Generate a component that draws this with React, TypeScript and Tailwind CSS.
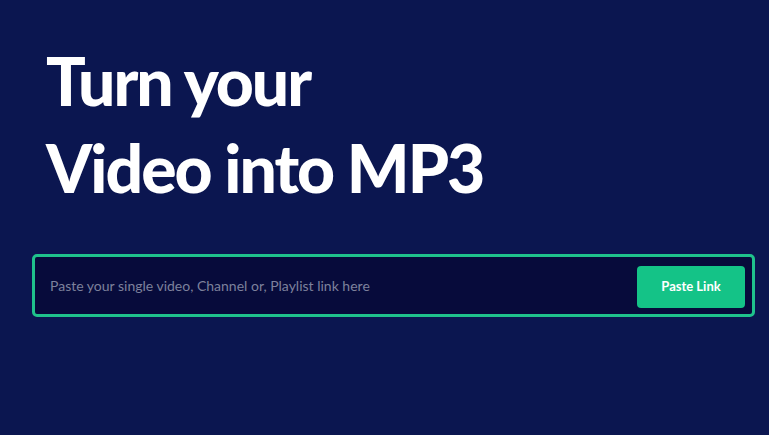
export default function App() {
    return (
        <div className="min-h-screen w-full bg-[#0b1650] pt-[37px] font-['Lato',sans-serif]">
            {/* Heading */}
            <h1 className="ml-[46px] text-[66px] font-black leading-[87px] tracking-[-2px] text-white">
                Turn your
                <br />
                Video into MP3
            </h1>

            {/* Link input */}
            <div className="ml-[32px] mt-[43px] flex h-[63px] w-[723px] items-center rounded-[5px] border-[3px] border-[#1fc28c] bg-[#070b3b] pl-[15px] pr-[7px]">
                <input
                    type="text"
                    autoFocus
                    placeholder="Paste your single video, Channel or, Playlist link here"
                    className="h-full flex-1 bg-transparent font-['Lato',sans-serif] text-[14px] text-white caret-[#9aa0c0] outline-none placeholder:text-[#7d819c]"
                />
                <button className="mt-[2px] h-[42px] w-[108px] rounded-[4px] bg-[#14c387] font-['Lato',sans-serif] text-[13px] font-bold text-white">
                    Paste Link
                </button>
            </div>
        </div>
    );
}
